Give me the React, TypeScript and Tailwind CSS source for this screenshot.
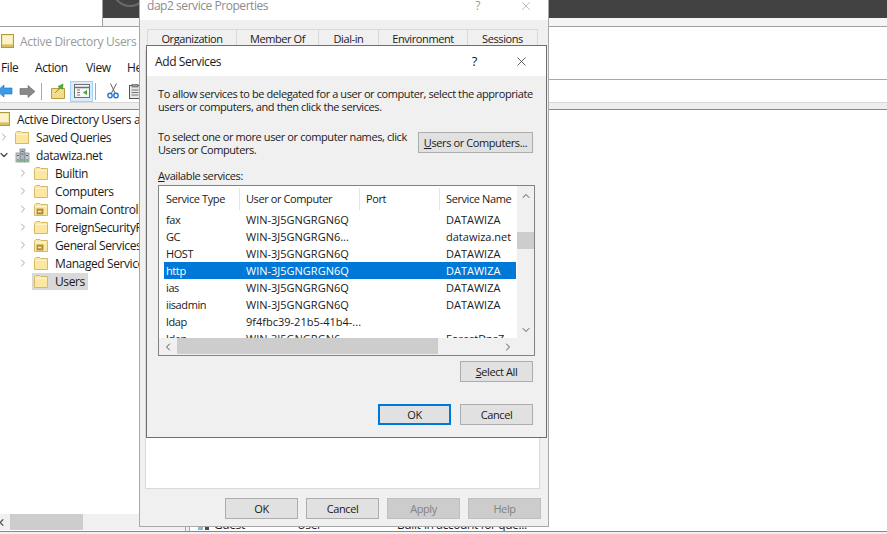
import { ChevronDown, ChevronLeft, ChevronRight, ChevronUp, X } from "lucide-react";

const services = [
  ["fax", "WIN-3J5GNGRGN6Q", "DATAWIZA"],
  ["GC", "WIN-3J5GNGRGN6...", "datawiza.net"],
  ["HOST", "WIN-3J5GNGRGN6Q", "DATAWIZA"],
  ["http", "WIN-3J5GNGRGN6Q", "DATAWIZA"],
  ["ias", "WIN-3J5GNGRGN6Q", "DATAWIZA"],
  ["iisadmin", "WIN-3J5GNGRGN6Q", "DATAWIZA"],
  ["ldap", "9f4fbc39-21b5-41b4-...", ""],
  ["ldap", "WIN-3J5GNGRGN6...", "ForestDnsZ"],
];

const tabs = [
  { name: "Organization", w: "w-[89px]" },
  { name: "Member Of", w: "w-[82px]" },
  { name: "Dial-in", w: "w-[60px]" },
  { name: "Environment", w: "w-[89px]" },
  { name: "Sessions", w: "w-[71px]" },
];

const tree = [
  { name: "Builtin", kind: "folder" },
  { name: "Computers", kind: "folder" },
  { name: "Domain Controllers", kind: "ou" },
  { name: "ForeignSecurityPrincipals", kind: "folder" },
  { name: "General Services", kind: "ou" },
  { name: "Managed Service Accounts", kind: "folder" },
];

function Folder({ ou }: { ou?: boolean }) {
  return (
    <svg width="14" height="13" viewBox="0 0 14 13" className="shrink-0">
      <path d="M.5 2.5V12.5H13.5V1.5H7L6 .5H2L1 1.5Z" fill="#fbe79f" stroke="#d8b861" />
      <path d="M1 3.5H13" stroke="#fff4c9" />
      {ou && <rect x="3" y="6" width="6" height="5" fill="#c9a44a" stroke="#7d6a30" strokeWidth=".6" />}
      {ou && <path d="M4 8.5H7" stroke="#fff" strokeWidth=".8" />}
    </svg>
  );
}

function Snapin() {
  return (
    <svg width="13" height="14" viewBox="0 0 13 14" className="shrink-0">
      <rect x=".5" y=".5" width="12" height="13" fill="#f5e7a6" stroke="#b4993f" />
      <rect x="2" y="2" width="9" height="8" fill="#fbf3cc" />
      <rect x="1" y="10.5" width="11" height="2.5" fill="#d9bf62" />
    </svg>
  );
}

function DomainIcon() {
  return (
    <svg width="15" height="15" viewBox="0 0 15 15" className="shrink-0">
      <rect x="5" y="1" width="5" height="13" fill="#aeb7bd" stroke="#77848c" strokeWidth=".7" />
      <rect x="1" y="5" width="4" height="9" fill="#c6ced2" stroke="#77848c" strokeWidth=".7" />
      <rect x="10" y="5" width="4" height="9" fill="#c6ced2" stroke="#77848c" strokeWidth=".7" />
      <path d="M6.5 3.5H8.5M6.5 6H8.5M2 7.5H4M11 7.5H13" stroke="#52606a" />
      <path d="M2 12H4M6.5 12H8.5M11 12H13" stroke="#52b043" strokeWidth="1.6" />
    </svg>
  );
}

function Button({ children, primary, disabled }: { children: React.ReactNode; primary?: boolean; disabled?: boolean }) {
  const look = disabled
    ? "border border-[#bfbfbf] bg-[#cccccc] text-[#838383]"
    : primary
      ? "border-2 border-[#0078d7] bg-[#e1e1e1]"
      : "border border-[#adadad] bg-[#e1e1e1]";
  return <div className={`flex h-[21px] w-[73px] shrink-0 items-center justify-center ${look}`}>{children}</div>;
}

function Toolbar() {
  return (
    <div className="flex h-[22px] w-[139px] shrink-0 items-center overflow-hidden">
      <svg width="13" height="12" viewBox="0 0 13 12" className="shrink-0">
        <path d="M-3 6L4 0V3H12V9H4V12Z" fill="#3a9be8" stroke="#1f6fb8" strokeWidth=".6" />
      </svg>
      <svg width="16" height="13" viewBox="0 0 16 13" className="ml-[6px] shrink-0">
        <path d="M16 6.5L9 .5V3.5H1V9.5H9V12.5Z" fill="#8a8a8a" stroke="#666" strokeWidth=".6" />
      </svg>
      <div className="ml-[6px] h-[17px] w-px shrink-0 bg-[#a8a8a8]" />
      <svg width="15" height="16" viewBox="0 0 15 16" className="ml-[9px] shrink-0">
        <path d="M.5 5.5H13.5V15.5H.5Z" fill="#f4dc8d" stroke="#b89a45" />
        <path d="M4 10L9 5L7 3.5L12 1L11.5 6L10 5" fill="#4caf3c" stroke="#2f8a26" strokeWidth=".6" />
      </svg>
      <div className="ml-[4px] flex h-[21px] w-[23px] shrink-0 items-center justify-center border border-[#99d1ff] bg-[#d9ecfb]">
        <svg width="16" height="14" viewBox="0 0 16 14">
          <rect x=".5" y=".5" width="15" height="13" fill="#f7f7f7" stroke="#6f6f6f" />
          <path d="M1 3.5H15" stroke="#6f6f6f" strokeWidth="1.5" />
          <path d="M3 6H6M3 8.5H6M3 11H6" stroke="#777" />
          <path d="M9 8.5L13 6V11Z" fill="#3fa535" />
        </svg>
      </div>
      <div className="ml-[2px] h-[17px] w-px shrink-0 bg-[#a8a8a8]" />
      <svg width="12" height="16" viewBox="0 0 12 16" className="ml-[11px] shrink-0">
        <path d="M9.5 .5L4.5 10M3.5 .5L8 10" stroke="#666" fill="none" />
        <circle cx="3" cy="12.5" r="2.2" fill="none" stroke="#1f78d1" strokeWidth="1.4" />
        <circle cx="9" cy="12.5" r="2.2" fill="none" stroke="#1f78d1" strokeWidth="1.4" />
      </svg>
      <svg width="12" height="15" viewBox="0 0 12 15" className="ml-[10px] shrink-0">
        <rect x=".5" y="1.5" width="11" height="13" fill="#e9e9e9" stroke="#555" />
        <rect x="3" y=".5" width="6" height="2.5" fill="#999" stroke="#555" strokeWidth=".6" />
        <path d="M2.5 6H9.5M2.5 8.5H9.5M2.5 11H9.5" stroke="#777" />
      </svg>
    </div>
  );
}

function AdWindow() {
  return (
    <div className="absolute left-0 top-[26px] flex h-[508px] w-[887px] flex-col border-t border-[#a0a0a0] bg-white">
      <div className="flex h-[28px] shrink-0 items-center pl-[1px] text-[12px] tracking-[-0.3px] text-[#9a9a9a]">
        <Snapin />
        <span className="ml-[6px] whitespace-nowrap">Active Directory Users and Computers</span>
      </div>
      <div className="flex h-[25px] shrink-0">
        <div className="flex w-[548px] items-center pl-[1px] text-[12px]">
          <span className="w-[34px]">File</span>
          <span className="w-[51px]">Action</span>
          <span className="w-[41px]">View</span>
          <span>Help</span>
        </div>
        <div className="flex-1 border-b border-[#a8a8a8]" />
      </div>
      <Toolbar />
      <div className="h-[7px] shrink-0 border-t border-[#d8d8d8] bg-[#eeeeee]" />
      <div className="flex min-h-0 flex-1 border-t border-[#888888]">
        <div className="flex w-[186px] shrink-0 flex-col overflow-hidden border-r border-[#a8a8a8]">
          <div className="flex-1 text-[12px]">
            <div className="flex h-[18px] items-center">
              <div className="-ml-[3px] shrink-0">
                <Snapin />
              </div>
              <span className="ml-[7px] whitespace-nowrap">Active Directory Users and Com</span>
            </div>
            <div className="flex h-[18px] items-center">
              <div className="flex w-[15px] shrink-0 justify-start">
                <ChevronRight size={12} strokeWidth={2} className="-ml-[2px] text-[#a6a6a6]" />
              </div>
              <Folder />
              <span className="ml-[7px] whitespace-nowrap">Saved Queries</span>
            </div>
            <div className="flex h-[18px] items-center">
              <div className="flex w-[15px] shrink-0 justify-start">
                <ChevronDown size={12} strokeWidth={2.4} className="-ml-[2px] text-[#444444]" />
              </div>
              <DomainIcon />
              <span className="ml-[6px] whitespace-nowrap">datawiza.net</span>
            </div>
            {tree.map((t) => (
              <div key={t.name} className="flex h-[18px] items-center pl-[17px]">
                <div className="flex w-[17px] shrink-0 justify-start">
                  <ChevronRight size={12} strokeWidth={2} className="text-[#a6a6a6]" />
                </div>
                <Folder ou={t.kind === "ou"} />
                <span className="ml-[7px] whitespace-nowrap">{t.name}</span>
              </div>
            ))}
            <div className="flex h-[18px] items-center pl-[32px]">
              <div className="flex h-[17px] items-center bg-[#d9d9d9] pl-[2px] pr-[3px]">
                <Folder />
                <span className="ml-[7px]">Users</span>
              </div>
            </div>
          </div>
          <div className="flex h-[16px] shrink-0 items-stretch bg-[#f0f0f0]">
            <div className="flex w-[10px] items-center">
              <ChevronLeft size={11} strokeWidth={2.6} className="-ml-[4px] text-[#555555]" />
            </div>
            <div className="w-[73px] bg-[#cdcdcd]" />
          </div>
          <div className="h-px shrink-0" />
        </div>
        <div className="w-[3px] shrink-0 bg-[#f0f0f0]" />
        <div className="flex flex-1 flex-col justify-end overflow-hidden border-l border-[#a8a8a8]">
          <div className="flex h-[14px] items-center pl-[7px] text-[12px]">
            <svg width="14" height="13" viewBox="0 0 14 13" className="shrink-0">
              <rect x="1" y="1" width="5" height="11" fill="#8fb4dc" />
              <rect x="8" y="1" width="4" height="11" fill="#4a4a4a" />
            </svg>
            <span className="ml-[3px] w-[83px] shrink-0">Guest</span>
            <span className="w-[100px] shrink-0">User</span>
            <span className="whitespace-nowrap">Built-in account for que...</span>
          </div>
        </div>
      </div>
      <div className="h-[3px] shrink-0 border-t border-[#8a8a8a] bg-[#f0f0f0]" />
    </div>
  );
}

function PropertiesDialog() {
  return (
    <div className="absolute left-[139px] top-[-10px] flex h-[537px] w-[410px] flex-col border border-[#a8a8a8] bg-[#f0f0f0]">
      <div className="flex h-[29px] shrink-0 items-center bg-white pl-[7px] pr-[15px] text-[12px] tracking-[-0.45px] text-[#8c8c8c]">
        <span className="flex-1">dap2 service Properties</span>
        <span className="mr-[39px] text-[#9a9a9a]">?</span>
        <X size={14} strokeWidth={1} className="text-[#8c8c8c]" />
      </div>
      <div className="flex shrink-0 pl-[7px] pt-[9px]">
        {tabs.map((t) => (
          <div key={t.name} className={`flex h-[21px] items-start justify-center border border-r-0 border-[#d9d9d9] pt-[2px] last:border-r ${t.w}`}>
            {t.name}
          </div>
        ))}
      </div>
      <div className="ml-[5px] h-[439px] w-[395px] shrink-0 border border-[#d9d9d9] bg-white" />
      <div className="flex justify-end gap-[8px] pr-[7px] pt-[9px]">
        <Button>OK</Button>
        <Button>Cancel</Button>
        <Button disabled>Apply</Button>
        <Button disabled>Help</Button>
      </div>
    </div>
  );
}

function ServicesList() {
  return (
    <div className="mt-[3px] flex h-[171px] shrink-0 flex-col border border-[#828282] bg-white">
      <div className="flex min-h-0 flex-1">
        <div className="w-[358px] shrink-0 overflow-hidden">
          <div className="flex h-[25px] items-center">
            <div className="flex h-[22px] w-[81px] shrink-0 items-center border-r border-[#e5e5e5] pl-[7px]">Service Type</div>
            <div className="flex h-[22px] w-[120px] shrink-0 items-center border-r border-[#e5e5e5] pl-[6px]">User or Computer</div>
            <div className="flex h-[22px] w-[80px] shrink-0 items-center border-r border-[#e5e5e5] pl-[6px]">Port</div>
            <div className="flex h-[22px] flex-1 items-center whitespace-nowrap pl-[6px]">Service Name</div>
          </div>
          {services.map((s, i) => (
            <div
              key={i}
              className={`ml-[5px] flex h-[17px] w-[352px] items-center whitespace-nowrap ${i === 3 ? "bg-[#0078d7] text-white" : ""}`}
            >
              <span className="w-[80px] shrink-0 pl-[2px]">{s[0]}</span>
              <span className="w-[200px] shrink-0 pl-[2px] tracking-normal">{s[1]}</span>
              <span className="pl-[2px] tracking-normal">{s[2]}</span>
            </div>
          ))}
        </div>
        <div className="flex w-[17px] shrink-0 flex-col items-center bg-[#f0f0f0]">
          <div className="flex h-[20px] items-center">
            <ChevronUp size={12} strokeWidth={2} className="text-[#555555]" />
          </div>
          <div className="mt-[26px] h-[17px] w-full bg-[#cdcdcd]" />
          <div className="flex-1" />
          <div className="flex h-[17px] items-center">
            <ChevronDown size={12} strokeWidth={2} className="text-[#555555]" />
          </div>
        </div>
      </div>
      <div className="flex h-[17px] shrink-0 bg-[#f0f0f0]">
        <div className="flex w-[18px] items-center justify-center">
          <ChevronLeft size={12} strokeWidth={2} className="text-[#555555]" />
        </div>
        <div className="h-[16px] w-[261px] bg-[#cdcdcd]" />
        <div className="flex-1" />
        <div className="flex w-[18px] items-center justify-center">
          <ChevronRight size={12} strokeWidth={2} className="text-[#555555]" />
        </div>
        <div className="w-[17px]" />
      </div>
    </div>
  );
}

function AddServicesDialog() {
  return (
    <div className="absolute left-[146px] top-[45px] flex h-[393px] w-[401px] flex-col border border-[#6e6e6e] bg-[#f0f0f0]">
      <div className="flex h-[30px] shrink-0 items-center bg-white pl-[8px] pr-[17px]">
        <span className="flex-1 text-[12px]">Add Services</span>
        <span className="mr-[37px] text-[13px]">?</span>
        <X size={15} strokeWidth={1.1} />
      </div>
      <div className="flex flex-1 flex-col pl-[11px] pr-[11px] pt-[11px]">
        <p className="whitespace-nowrap">
          To allow services to be delegated for a user or computer, select the appropriate
          <br />
          users or computers, and then click the services.
        </p>
        <div className="mt-[17px] flex justify-between pr-[2px]">
          <p className="whitespace-nowrap">
            To select one or more user or computer names, click
            <br />
            Users or Computers.
          </p>
          <div className="mt-[2px] flex h-[21px] w-[115px] shrink-0 items-center justify-center whitespace-nowrap border border-[#adadad] bg-[#e1e1e1]">
            <span>
              <u>U</u>sers or Computers...
            </span>
          </div>
        </div>
        <p className="mt-[13px]">
          <u>A</u>vailable services:
        </p>
        <ServicesList />
        <div className="mt-[5px] flex justify-end pr-[2px]">
          <Button>
            <span>
              <u>S</u>elect All
            </span>
          </Button>
        </div>
        <div className="mt-[22px] flex justify-end gap-[9px] pr-[2px]">
          <Button primary>OK</Button>
          <Button>Cancel</Button>
        </div>
      </div>
    </div>
  );
}

export default function App() {
  return (
    <div className="relative h-[534px] w-[887px] overflow-hidden bg-white font-['Open_Sans',sans-serif] text-[11px] leading-[13px] tracking-[-0.4px] text-[#1a1a1a]">
      <div className="absolute left-[102px] top-0 h-[27px] w-[785px] overflow-hidden border-l border-[#a0a0a0] bg-[#f5f5f5]">
        <div className="relative h-[18px] overflow-hidden bg-[#424242]">
          <div className="absolute left-[9px] top-[-29px] h-[36px] w-[36px] rounded-full border-2 border-[#6a6a6a]" />
        </div>
      </div>
      <AdWindow />
      <PropertiesDialog />
      <AddServicesDialog />
    </div>
  );
}
